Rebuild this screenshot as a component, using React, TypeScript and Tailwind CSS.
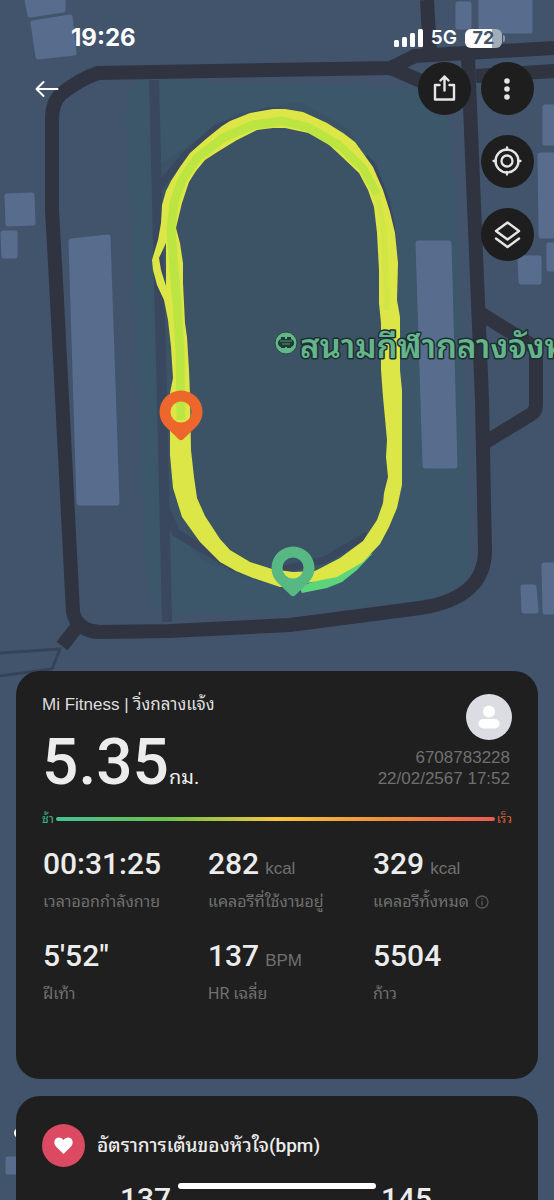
import type { ReactNode } from "react";

const SANS = "font-['Roboto','Noto_Sans_Thai_Looped','Noto_Sans_Thai','Noto_Sans',sans-serif]";

const OUTER =
  "M285 109 L273 109 L250 113 L230 121 L222 126 L207 138 L190 153 L180 167 L171 181 L166 191 L162 205 L161 223 L158 240 L152 260 L153 270 L157 285 L164 300 L168 320 L171 347 L173 378 L170 393 L170 455 L173 488 L182 517 L200 542 L220 562 L236 571 L253 578 L280 587 L307 583 L337 577 L363 562 L380 544 L389 527 L397 508 L402 485 L402 390 L400 370 L400 317 L397 300 L398 263 L395 233 L390 212 L383 190 L373 167 L355 142 L343 133 L327 123 L303 112 Z";
const INNER =
  "M285 128 L273 128 L257 130 L237 140 L219 151 L205 160 L196 171 L189 182 L182 203 L176 228 L180 243 L183 263 L183 283 L185 323 L187 337 L189 370 L190 395 L191 450 L194 477 L197 498 L205 516 L220 539 L230 550 L250 562 L272 569 L293 572 L315 571 L340 558 L363 541 L377 520 L383 503 L384 493 L388 477 L386 457 L387 440 L383 397 L381 370 L381 323 L379 303 L379 270 L377 233 L374 207 L368 190 L359 173 L340 155 L327 143 L313 134 Z";

const BUILDINGS: string[] = [
  "M27 0 L63 0 L63 10 L30 15 Z",
  "M33 23 L70 17 L74 53 L38 57 Z",
  "M7 196 L32 195 L33 223 L8 224 Z",
  "M3 233 L15 233 L15 256 L4 256 Z",
  "M71 241 L108 237 L117 503 L79 503 Z",
  "M418 243 L449 243 L455 466 L425 466 Z",
  "M481 0 L530 0 L530 31 L481 31 Z",
  "M458 4 L469 4 L469 27 L458 27 Z",
  "M545 107 L560 107 L560 143 L545 143 Z",
  "M540 155 L560 155 L560 236 L541 236 Z",
  "M520 258 L539 258 L539 282 L521 282 Z",
  "M549 245 L560 245 L560 269 L549 269 Z",
  "M523 587 L534 587 L536 611 L524 611 Z",
  "M544 565 L560 565 L560 612 L545 612 Z",
  "M8 1159 L30 1159 L30 1172 L8 1172 Z",
];

function Pin({ x, y, color }: { x: number; y: number; color: string }) {
  return (
    <path
      transform={`translate(${x} ${y})`}
      fill={color}
      fillRule="evenodd"
      d="M0 -21.5 A21.5 21.5 0 0 1 21.5 0 C21.5 6 19 11 15 15 L2 27.500 Q0 29 -2 27.500 L-15 15 C-19 11 -21.500 6 -21.500 0 A21.500 21.500 0 0 1 0 -21.500 Z M0 -10.500 A10.500 10.500 0 1 0 0 10.500 A10.500 10.500 0 1 0 0 -10.500 Z"
    />
  );
}

function RouteMap() {
  return (
    <svg
      className="absolute inset-0 h-full w-full"
      viewBox="0 0 554 1200"
      preserveAspectRatio="xMidYMin slice"
      aria-hidden="true"
    >
      <rect width="554" height="1200" fill="#42546c" />
      <path d="M138 80 L420 88 L448 110 L456 200 L470 560 Q468 590 430 600 L290 613 L160 613 Q148 600 146 570 L126 110 Q127 90 138 80 Z" fill="#3c566a" />
      <path d="M160 165 L235 114 L300 102 L350 130 L392 215 L398 500 L375 548 L260 582 L205 562 L168 525 Z" fill="#3c5366" />
      {BUILDINGS.map((d) => (
        <path key={d} d={d} fill="#586d8e" stroke="#586d8e" strokeWidth="5" strokeLinejoin="round" />
      ))}
      <g fill="none" stroke="#39475f">
        <path d="M154 80 L162 400 L167 622" strokeWidth="10" />
        <path d="M159 187 L184 157 L217 128 L268 111 L280 112" strokeWidth="8" />
        <path d="M365 157 L373 166 L387 203 L392 230" strokeWidth="7" />
        <path d="M164 505 L176 533 L235 568" strokeWidth="8" />
        <path d="M275 571 L325 560 L367 535" strokeWidth="7" />
      </g>
      <path d="M0 653 L60 649 L52 669 L0 676" fill="none" stroke="#35435a" strokeWidth="3" />
      <g fill="none" stroke="#2f3440" strokeWidth="14">
        <path d="M554 48 L415 56 L391 68 L98 73 Q80 79 61 94 Q52 102 52 120 L52 210 L57 300 L73 612 Q77 631 100 632 L170 631 L290 625 L420 608 C460 602 485 585 485 550 L482 400 L468 58" />
        <path d="M391 68 L430 85" />
        <path d="M427 0 L430 55" />
        <path d="M476 76 L554 71" />
        <path d="M480 313 L536 348 L536 405 Q536 412 530 415 L484 443" />
        <path d="M77 627 L62 646" />
      </g>
      <path d="M299 587 L336 573 L373 553 L357 570 L342 582 L327 588 L302 593 Z" fill="#5bd47c" />
      <path
        d={`${OUTER} ${INNER} M166 243 L159 258 L161 270 L166 286 Z`}
        fillRule="evenodd"
        fill="#dce646"
      />
      <g fill="none" stroke="#bde542" strokeLinejoin="round">
        <path
          d="M181 420 L180 350 L177 303 L173 257 L171 230 L174 203 L182 180 L197 158 L223 138 L253 125 L283 121 L307 127 L340 146"
          strokeWidth="9"
        />
        <path d="M340 146 L363 168 L377 194" strokeWidth="8" />
        <path d="M377 194 L384 230 L387 310" strokeWidth="6" strokeOpacity="0.35" />
      </g>
      <Pin x={181} y={412} color="#ed672c" />
      <Pin x={293} y={568} color="#58b884" />
      <g transform="translate(286 343)">
        <circle r="11" fill="#65b58b" stroke="#29483f" strokeWidth="1" />
        <path d="M-5 -6 H-1 V-4 H1 V-6 H5 V-4 Q8 -3 8 0 Q8 3 5 4 V5 H1 V4 H-1 V5 H-5 V4 Q-8 3 -8 0 Q-8 -3 -5 -4 Z" fill="#1f3934" />
        <path d="M-6 -2 H6 M-4 1 H4" stroke="#65b58b" strokeWidth="0.800" />
      </g>
      <text
        x="300"
        y="358"
        className={`${SANS} text-[33px] font-semibold`}
        fill="#65b58b"
        stroke="#1e2e35"
        strokeWidth="3"
        strokeLinejoin="round"
        paintOrder="stroke"
      >
        สนามกีฬากลางจังหวัด
      </text>
      <circle cx="19" cy="1133" r="5" fill="#ffffff" />
    </svg>
  );
}

function RoundButton({ label, children }: { label: string; children: ReactNode }) {
  return (
    <button type="button" aria-label={label} className="flex size-[53px] items-center justify-center rounded-full bg-[#1e1e1e] text-[#e6e6e6]">
      {children}
    </button>
  );
}

function StatusBar() {
  return (
    <div className="flex h-[62px] items-start justify-between pt-6 pr-[49px] pl-[71px] font-['Inter',sans-serif] text-white">
      <span className="text-2xl leading-7 font-bold">19:26</span>
      <div className="flex h-7 items-center gap-2">
        <svg width="29" height="18" viewBox="0 0 29 18" fill="currentColor" aria-hidden="true">
          <rect x="0" y="11" width="5" height="7" rx="1.500" />
          <rect x="8" y="8" width="5" height="10" rx="1.500" />
          <rect x="16" y="4" width="5" height="14" rx="1.500" />
          <rect x="24" y="0" width="5" height="18" rx="1.500" />
        </svg>
        <span className="text-[19px] leading-7 font-semibold">5G</span>
        <div className="flex items-center gap-px">
          <span className="flex h-[19px] w-[37px] items-center justify-center rounded-md bg-linear-to-r from-white from-72% to-[#a3adba] to-72% text-lg leading-none font-bold text-[#42546c]">
            72
          </span>
          <span className="h-[7px] w-[2px] rounded-r-full bg-[#8793a4]" />
        </div>
      </div>
    </div>
  );
}

function MapControls() {
  return (
    <div className="flex items-start justify-between pr-5 pl-[34px]">
      <button type="button" aria-label="Back" className="flex h-[53px] w-7 items-center text-white">
        <svg width="26" height="18" viewBox="0 0 26 18" fill="none" stroke="currentColor" strokeWidth="2" strokeLinecap="round" strokeLinejoin="round" aria-hidden="true">
          <path d="M23.500 9 H2.500 M9.500 2 L2.500 9 L9.500 16" />
        </svg>
      </button>
      <div className="flex items-start gap-[10px]">
        <RoundButton label="Share">
          <svg width="26" height="28" viewBox="0 0 26 28" fill="none" stroke="currentColor" strokeWidth="2.400" strokeLinecap="round" strokeLinejoin="round" aria-hidden="true">
            <path d="M7.500 10 H3 V24.500 H22 V10 H17.500 M12.500 15.500 V1.500 M8.500 5.500 L12.500 1.500 L16.500 5.500" />
          </svg>
        </RoundButton>
        <div className="flex flex-col gap-5">
          <RoundButton label="More">
            <svg width="9" height="24" viewBox="0 0 9 24" fill="currentColor" aria-hidden="true">
              <circle cx="4" cy="4" r="2.800" />
              <circle cx="4" cy="12" r="2.800" />
              <circle cx="4" cy="20" r="2.800" />
            </svg>
          </RoundButton>
          <RoundButton label="Locate">
            <svg width="31" height="31" viewBox="0 0 31 31" fill="none" stroke="currentColor" strokeWidth="2.300" strokeLinecap="round" aria-hidden="true">
              <circle cx="15" cy="15" r="11.500" />
              <circle cx="15" cy="15" r="5.500" />
              <path d="M15 1.500 V4 M15 26 V28.500 M1.500 15 H4 M26 15 H28.500" />
            </svg>
          </RoundButton>
          <RoundButton label="Map layers">
            <svg width="28" height="30" viewBox="0 0 28 30" fill="none" stroke="currentColor" strokeWidth="2.400" strokeLinecap="round" strokeLinejoin="round" aria-hidden="true">
              <path d="M13.500 2.500 L25 11 L13.500 19.500 L2 11 Z M2 18.500 L13.500 27 L25 18.500" />
            </svg>
          </RoundButton>
        </div>
      </div>
    </div>
  );
}

interface StatProps {
  value: string;
  unit?: string;
  label: string;
  info?: boolean;
}

const STATS: StatProps[] = [
  { value: "00:31:25", label: "เวลาออกกำลังกาย" },
  { value: "282", unit: "kcal", label: "แคลอรีที่ใช้งานอยู่" },
  { value: "329", unit: "kcal", label: "แคลอรีทั้งหมด", info: true },
  { value: "5'52\"", label: "ฝีเท้า" },
  { value: "137", unit: "BPM", label: "HR เฉลี่ย" },
  { value: "5504", label: "ก้าว" },
];

function Stat({ value, unit, label, info }: StatProps) {
  return (
    <div className="flex flex-col gap-2 whitespace-nowrap">
      <dd className="flex items-baseline gap-[6px] text-[#ececec]">
        <span className="text-3xl leading-9 font-medium">{value}</span>
        {unit && <span className="font-['Liberation_Sans',sans-serif] text-[17px] text-[#707070]">{unit}</span>}
      </dd>
      <dt className="flex h-6 items-center gap-[6px] text-base leading-6 text-[#707070]">
        {label}
        {info && (
          <svg width="14" height="14" viewBox="0 0 14 14" fill="none" stroke="#585858" strokeWidth="1.300" aria-hidden="true">
            <circle cx="7" cy="7" r="6" />
            <path d="M7 6 V10.500 M7 3.500 V5" />
          </svg>
        )}
      </dt>
    </div>
  );
}

function SummaryCard() {
  return (
    <section className="h-[408px] rounded-3xl bg-[#1f1f1f] px-[26px] pt-[22px]">
      <div className="flex h-[120px] justify-between">
        <div>
          <h1 className="h-6 font-['Liberation_Sans','Noto_Sans_Thai_Looped','Noto_Sans_Thai',sans-serif] text-[17px] leading-6 whitespace-nowrap text-[#dedede]">
            Mi Fitness | วิ่งกลางแจ้ง
          </h1>
          <p className="mt-2 flex items-baseline text-[#ececec]">
            <span className="text-[64px] leading-[76px] font-medium">5.35</span>
            <span className="text-xl">กม.</span>
          </p>
        </div>
        <div className="flex flex-col items-end pt-px font-['Liberation_Sans',sans-serif] text-[17px] leading-[21px] text-[#707070]">
          <svg width="46" height="46" viewBox="0 0 46 46" className="mb-[7px]" aria-hidden="true">
            <circle cx="23" cy="23" r="23" fill="#dcdde3" />
            <circle cx="23" cy="17.500" r="6" fill="#ffffff" />
            <rect x="12.500" y="25" width="21" height="9.500" rx="4.750" fill="#ffffff" />
          </svg>
          <span className="pr-[2px]">6708783228</span>
          <span className="pr-[2px]">22/02/2567 17:52</span>
        </div>
      </div>
      <div className="flex h-3 items-center text-xs leading-3">
        <span className="text-[#43b88a]">ช้า</span>
        <span className="mx-[2px] h-1 flex-1 rounded-full bg-[linear-gradient(to_right,#43c294,#6cc24c_25%,#f5c83d_50%,#f09038_75%,#ea5c51)]" />
        <span className="text-[#d8643a]">เร็ว</span>
      </div>
      <dl className="mt-[21px] grid grid-cols-[165px_165px_1fr] gap-y-6 pl-px">
        {STATS.map((s) => (
          <Stat key={s.label} {...s} />
        ))}
      </dl>
    </section>
  );
}

function HeartRateCard() {
  return (
    <section className="rounded-t-3xl bg-[#1f1f1f] px-[26px] pt-7 pb-6">
      <div className="flex items-center gap-3">
        <svg width="43" height="43" viewBox="0 0 43 43" aria-hidden="true">
          <circle cx="21.500" cy="21.500" r="21.500" fill="#dc4a62" />
          <path d="M21.500 30 L14 22.500 C11 19.500 12 13.500 17 13.500 Q20 13.500 21.500 16 Q23 13.500 26 13.500 C31 13.500 32 19.500 29 22.500 Z" fill="#ffffff" />
        </svg>
        <h2 className="text-[19px] leading-7 font-medium whitespace-nowrap text-[#ececec]">อัตราการเต้นของหัวใจ(bpm)</h2>
      </div>
      <div className="mt-[14px] grid grid-cols-2 text-center text-3xl leading-9 font-medium text-[#ececec]">
        <span className="pr-7">137</span>
        <span className="pl-6">145</span>
      </div>
    </section>
  );
}

export default function App() {
  return (
    <main className={`relative h-screen overflow-hidden bg-[#42546c] ${SANS}`}>
      <RouteMap />
      <div className="relative flex flex-col">
        <div className="h-[671px]">
          <StatusBar />
          <MapControls />
        </div>
        <div className="flex flex-col gap-[17px] px-4">
          <SummaryCard />
          <HeartRateCard />
        </div>
      </div>
      <div className="absolute bottom-[11px] left-1/2 h-[6px] w-[198px] -translate-x-1/2 rounded-full bg-white" />
    </main>
  );
}
